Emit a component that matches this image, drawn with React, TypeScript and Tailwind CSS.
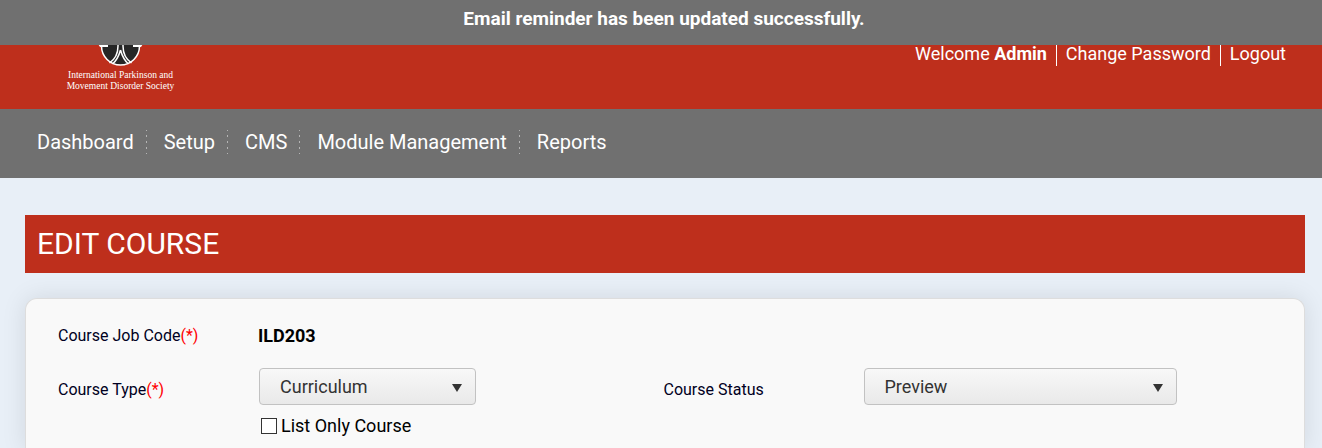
import React from "react";

type NavItem = {
  label: string;
  href: string;
};

type SelectFieldProps = {
  id: string;
  options: string[];
  className: string;
};

const navItems: NavItem[] = [
  { label: "Dashboard", href: "#dashboard" },
  { label: "Setup", href: "#setup" },
  { label: "CMS", href: "#cms" },
  { label: "Module Management", href: "#modules" },
  { label: "Reports", href: "#reports" },
];

const Required: React.FC = () => <span className="text-[#ff0000]">(*)</span>;

const SocietyLogo: React.FC = () => (
  <a href="#home" className="block">
    <svg
      width="110"
      height="66"
      viewBox="0 0 220 132"
      className="font-['Liberation_Serif',serif]"
    >
      <circle cx="109" cy="42" r="38" fill="#262626" stroke="#fff" strokeWidth="3" />
      <path d="M64 38h20v6H68zM154 38h-20v6h16z" fill="#fff" />
      <circle cx="109" cy="16" r="6" fill="#fff" />
      <path
        d="M104 26v16c0 12-5 26-17 34M114 26v16c0 12 5 26 17 34M109 50c-3 11-8 21-16 28M109 50c3 11 8 21 16 28"
        fill="none"
        stroke="#fff"
        strokeWidth="3"
      />
      <g fill="#fff" fontSize="19" textAnchor="middle">
        <text x="109" y="105">International Parkinson and</text>
        <text x="109" y="128">Movement Disorder Society</text>
      </g>
    </svg>
  </a>
);

const SelectField: React.FC<SelectFieldProps> = ({ id, options, className }) => (
  <div className={`relative ${className}`}>
    <select
      id={id}
      className="h-[37px] w-full appearance-none rounded-[4px] border border-[#c2c2c2] bg-linear-to-b from-[#f8f8f8] to-[#e9e9e9] pl-5 pr-8 text-[18px] text-[#333]"
    >
      {options.map((option) => (
        <option key={option}>{option}</option>
      ))}
    </select>
    <svg
      width="10"
      height="8"
      viewBox="0 0 10 8"
      className="pointer-events-none absolute right-[14px] top-4"
      aria-hidden="true"
    >
      <path d="M0 0h10L5 8z" fill="#333" />
    </svg>
  </div>
);

const App: React.FC = () => {
  return (
    <div className="min-h-screen bg-[#e8eff7] font-['Roboto',sans-serif] text-black">
      <div
        role="status"
        className="fixed inset-x-0 top-0 z-10 h-[45px] bg-[#707070] pt-[5px] pl-[6px] text-center text-[19px] font-bold leading-[27px] text-white"
      >
        Email reminder has been updated successfully.
      </div>

      <header className="flex h-[109px] items-end justify-between bg-[#be2f1c] pl-[66px] pr-9 text-white">
        <div className="pb-[18px]">
          <SocietyLogo />
        </div>
        <div className="flex self-start pt-[42px] text-[18px] leading-6">
          <span className="pr-[9px]">
            Welcome <b>Admin</b>
          </span>
          <a href="#password" className="border-l border-white px-[9px]">
            Change Password
          </a>
          <a href="#logout" className="border-l border-white pl-[9px]">
            Logout
          </a>
        </div>
      </header>

      <nav className="flex h-[69px] items-center bg-[#707070] pb-[3px] pl-[37px] text-[20px] leading-6 text-white">
        {navItems.map((item, index) => (
          <React.Fragment key={item.label}>
            {index > 0 && (
              <svg width="1" height="25" className="ml-3 mr-[17px]" aria-hidden="true">
                <path d="M.5 0v25" stroke="#b5b5b5" strokeDasharray="1 4 2 4 2 4 2 4 1 4" />
              </svg>
            )}
            <a href={item.href}>{item.label}</a>
          </React.Fragment>
        ))}
      </nav>

      <main className="pl-[25px] pr-[17px] pt-[37px]">
        <h1 className="bg-[#be2f1c] px-3 text-[30px] leading-[58px] text-white">
          EDIT COURSE
        </h1>

        <form className="mt-[25px] rounded-t-xl border border-b-0 border-[#ddd] bg-[#f9f9f9] pl-8 pr-[35px] pt-[25px] shadow-[0_0_25px_rgba(0,0,0,0.1)]">
          <div className="flex items-center leading-6">
            <span className="w-[200px] text-[16px] text-[#000022]">
              Course Job Code
              <Required />
            </span>
            <b className="text-[18px]">ILD203</b>
          </div>

          <div className="mt-5 grid grid-cols-2">
            <div className="flex">
              <label
                htmlFor="courseType"
                className="w-[201px] pt-[10px] text-[16px] leading-6 text-[#000022]"
              >
                Course Type
                <Required />
              </label>
              <div>
                <SelectField
                  id="courseType"
                  options={["Curriculum", "Module"]}
                  className="w-[217px]"
                />
                <label className="mt-[9px] flex items-center gap-1 pb-3 pl-[2px] text-[18px] leading-6">
                  <input
                    type="checkbox"
                    className="size-4 appearance-none border border-[#333] bg-white checked:bg-[#333]"
                  />
                  List Only Course
                </label>
              </div>
            </div>
            <div className="flex">
              <label
                htmlFor="courseStatus"
                className="w-[200px] pt-[10px] text-[16px] leading-6 text-[#000022]"
              >
                Course Status
              </label>
              <SelectField
                id="courseStatus"
                options={["Preview", "Published"]}
                className="w-[313px]"
              />
            </div>
          </div>
        </form>
      </main>
    </div>
  );
};

export default App;
